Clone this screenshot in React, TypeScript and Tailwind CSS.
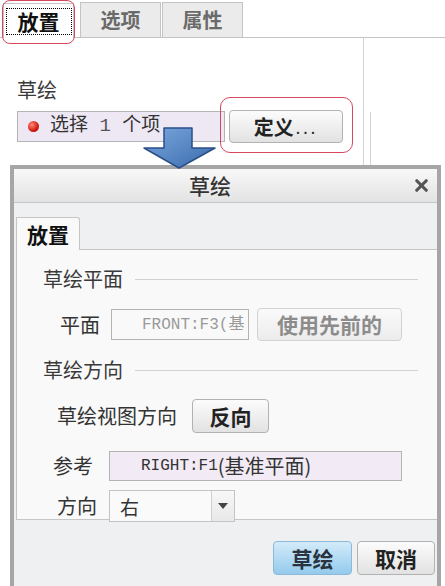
import { X } from "lucide-react";

const cjk = { fontFamily: '"Noto Sans CJK SC", "Noto Sans", sans-serif' };
const mono = { fontFamily: '"Liberation Mono", "Noto Sans CJK SC", monospace' };

function Arrow() {
  return (
    <svg width="76" height="44" viewBox="0 0 76 44" className="absolute left-[142px] top-[127px]">
      <defs>
        <linearGradient id="ag" x1="0" y1="0" x2="1" y2="1">
          <stop offset="0" stopColor="#7aa8dd" />
          <stop offset="1" stopColor="#3a6aad" />
        </linearGradient>
      </defs>
      <polygon points="22,1 50,1 50,21 73,21 37,41 2,21 22,21" fill="url(#ag)" stroke="#2b4f86" strokeWidth="1.5" strokeLinejoin="round" />
    </svg>
  );
}

function SectionHead({ title }: { title: string }) {
  return (
    <div className="flex items-center h-[22px] pl-[26px] pr-[19px]">
      <span className="text-[20px] leading-none text-[#3a3a3a]">{title}</span>
      <div className="flex-1 ml-[12px] h-px bg-[#d2d2d2]" />
    </div>
  );
}

export default function App() {
  return (
    <div className="w-[445px] h-[586px] overflow-hidden bg-white relative" style={cjk}>
      {/* top feature panel */}
      <div className="h-[165px] flex flex-col">
        <div className="flex items-end pt-[3px] pl-[3px] h-[38px] border-b border-[#c4c4c4]">
          <div className="w-[71px] h-[35px] bg-white border border-b-0 border-[#c4c4c4] flex items-center justify-center -mb-px">
            <span className="w-[66px] h-[27px] flex items-center justify-center border border-dotted border-black text-[21px] font-bold leading-none text-[#111]">放置</span>
          </div>
          <div className="ml-[6px] w-[81px] h-[35px] bg-[#ebebeb] border border-b-0 border-[#c4c4c4] flex items-center justify-center text-[20px] font-bold leading-none text-[#6a6a6a]">选项</div>
          <div className="ml-px w-[81px] h-[35px] bg-[#ebebeb] border border-b-0 border-[#c4c4c4] flex items-center justify-center text-[20px] font-bold leading-none text-[#6a6a6a]">属性</div>
        </div>
        <div className="flex flex-1">
          <div className="w-[364px] border-r border-[#d4d4d4] pl-[17px]">
            <div className="mt-[41px] h-[22px] text-[20px] leading-none text-[#3a3a3a] flex items-center">草绘</div>
            <div className="mt-[9px] flex items-center h-[33px]">
              <div className="w-[208px] h-[31px] bg-[#eee8f4] border border-[#b4b4b4] flex items-center pl-[10px]">
                <span className="w-[11px] h-[11px] rounded-full bg-[radial-gradient(circle_at_35%_35%,#ff8a7a,#d21a10_60%,#8a0c06)]" />
                <span className="ml-[11px] text-[19px] leading-none text-[#333]" style={mono}>选择 <span className="text-[#555]">1</span> 个项</span>
              </div>
              <button className="ml-[4px] w-[114px] h-[33px] rounded-[4px] border border-[#b2b2b2] bg-gradient-to-b from-[#fcfcfc] to-[#e2e2e2] flex items-center justify-center text-[20px] font-bold leading-none text-[#222]">
                定义<span className="font-normal text-[16px] tracking-[3px] ml-[2px]">...</span>
              </button>
            </div>
          </div>
          <div className="w-[6px]" />
          <div className="flex-1 mt-[74px] border-l border-[#d4d4d4]" />
        </div>
      </div>

      {/* annotation rings */}
      <div className="absolute left-[2px] top-0 w-[73px] h-[44px] rounded-[8px] border-[1.5px] border-[#d9475c]" />
      <div className="absolute left-[220px] top-[97px] w-[133px] h-[56px] rounded-[10px] border-[1.5px] border-[#d9475c]" />
      <Arrow />

      {/* dialog */}
      <div className="ml-[10px] w-[431px] h-[426px] border-[4px] border-[#a6a6a6] bg-[#eff0f2] flex flex-col">
        <div className="h-[34px] flex items-center border-b border-[#c6c6c6] bg-gradient-to-b from-[#f8f8f8] to-[#e3e3e3]">
          <div className="flex-1 text-center text-[21px] font-medium leading-none text-[#333]">草绘</div>
          <div className="w-[31px] flex justify-center">
            <X size={19} strokeWidth={4} color="#555" />
          </div>
        </div>
        <div className="pt-[14px] pl-[2px]">
          <div className="relative z-10 -mb-px w-[64px] h-[33px] bg-[#f9f9f9] border border-b-0 border-[#c6c6c6] rounded-tr-[3px] flex items-center justify-center text-[21px] font-bold leading-none text-[#111]">放置</div>
          <div className="h-[271px] bg-[#f9f9f9] border border-[#c6c6c6] border-r-0 flex flex-col">
            <div className="mt-[18px]"><SectionHead title="草绘平面" /></div>
            <div className="mt-[18px] flex items-center h-[34px] pl-[43px]">
              <span className="w-[51px] text-[20px] leading-none text-[#333]">平面</span>
              <div className="w-[138px] h-[31px] bg-[#f9f9f9] border border-[#b4b4b4] overflow-hidden whitespace-nowrap flex items-center pl-[30px] text-[16px] leading-none text-[#9a9a9a]" style={mono}>FRONT:F3(基</div>
              <button className="ml-[8px] w-[145px] h-[33px] rounded-[4px] border border-[#d2d2d2] bg-gradient-to-b from-[#fafafa] to-[#ececec] text-[21px] font-bold leading-none text-[#8c8c8c]">使用先前的</button>
            </div>
            <div className="mt-[18px]"><SectionHead title="草绘方向" /></div>
            <div className="mt-[18px] flex items-center h-[34px] pl-[40px]">
              <span className="w-[135px] text-[20px] leading-none text-[#333]">草绘视图方向</span>
              <button className="w-[77px] h-[34px] rounded-[4px] border border-[#b2b2b2] bg-gradient-to-b from-[#fcfcfc] to-[#e2e2e2] text-[21px] font-bold leading-none text-[#222]">反向</button>
            </div>
            <div className="mt-[18px] flex items-center h-[30px] pl-[36px]">
              <span className="w-[56px] text-[20px] leading-none text-[#333]">参考</span>
              <div className="w-[293px] h-[30px] bg-[#f2eaf4] border border-[#b4b4b4] flex items-center pl-[31px] whitespace-nowrap text-[16px] leading-none text-[#333]" style={mono}>
                RIGHT:F1<span className="text-[20px]" style={cjk}>(基准平面)</span>
              </div>
            </div>
            <div className="mt-[9px] flex items-center h-[32px] pl-[40px]">
              <span className="w-[52px] text-[20px] leading-none text-[#333]">方向</span>
              <div className="w-[126px] h-[32px] flex border border-[#c4c4c4] bg-[#fafafa]">
                <div className="flex-1 flex items-center pl-[10px] text-[19px] leading-none text-[#333]">右</div>
                <div className="w-[23px] border-l border-[#d0d0d0] bg-gradient-to-b from-[#f8f8f8] to-[#e8e8e8] flex items-center justify-center">
                  <svg width="10" height="7" viewBox="0 0 10 7"><polygon points="0,0 10,0 5,6" fill="#444" /></svg>
                </div>
              </div>
            </div>
          </div>
          <div className="flex justify-end pt-[21px] pr-[2px] gap-[5px]">
            <button className="w-[79px] h-[34px] rounded-[4px] border border-[#8cb9da] bg-gradient-to-b from-[#d3ebf9] to-[#93caec] text-[21px] font-bold leading-none text-[#2a3340]">草绘</button>
            <button className="w-[78px] h-[34px] rounded-[4px] border border-[#b2b2b2] bg-gradient-to-b from-[#fcfcfc] to-[#e2e2e2] text-[21px] font-bold leading-none text-[#222]">取消</button>
          </div>
        </div>
      </div>
    </div>
  );
}
